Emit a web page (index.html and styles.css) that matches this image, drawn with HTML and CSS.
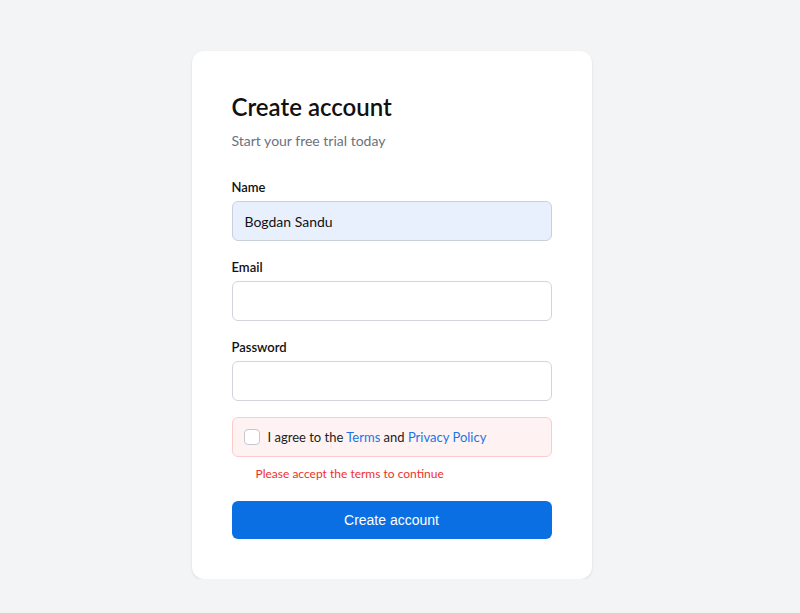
FILE: index.html
```html
<!DOCTYPE html>
<html lang="en">
<head>
<meta charset="utf-8">
<title>Create account</title>
<link rel="stylesheet" href="styles.css">
</head>
<body>
<main class="page">
  <form class="card">
    <h1 class="title">Create account</h1>
    <p class="subtitle">Start your free trial today</p>

    <div class="field">
      <label class="label" for="name">Name</label>
      <input class="input input-filled" id="name" type="text" value="Bogdan Sandu">
    </div>

    <div class="field">
      <label class="label" for="email">Email</label>
      <input class="input" id="email" type="email">
    </div>

    <div class="field">
      <label class="label" for="password">Password</label>
      <input class="input" id="password" type="password">
    </div>

    <div class="terms">
      <span class="checkbox"></span>
      <span class="terms-text">I agree to the <a class="link" href="#">Terms</a> and <a class="link" href="#">Privacy Policy</a></span>
    </div>
    <p class="error">Please accept the terms to continue</p>

    <button class="button" type="button">Create account</button>
  </form>
</main>
</body>
</html>
```

FILE: styles.css
```css
* { box-sizing: border-box; }

html, body {
  margin: 0;
  padding: 0;
  background: #f3f4f6;
  font-family: "Lato", "Noto Sans", sans-serif;
  color: #111827;
}

.page {
  display: flex;
  justify-content: center;
  padding: 51px 17px 0 0;
}

.card {
  width: 400px;
  background: #ffffff;
  border-radius: 12px;
  padding: 40px;
  box-shadow: 0 1px 3px rgba(0, 0, 0, 0.08), 0 1px 2px rgba(0, 0, 0, 0.04);
  display: flex;
  flex-direction: column;
}

.title {
  margin: 0;
  font-size: 24px;
  line-height: 32px;
  font-weight: 600;
  color: #111111;
}

.subtitle {
  margin: 8px 0 0;
  font-size: 14px;
  line-height: 20px;
  color: #6b7280;
}

.field {
  display: flex;
  flex-direction: column;
  gap: 5px;
  margin-top: 17px;
}

.field:first-of-type {
  margin-top: 27px;
}

.label {
  font-size: 13px;
  line-height: 18px;
  font-weight: 600;
  color: #111111;
}

.input {
  height: 40px;
  width: 100%;
  border: 1px solid #d1d5db;
  border-radius: 6px;
  padding: 0 12px;
  font-family: inherit;
  font-size: 14px;
  color: #111111;
  background: #ffffff;
  outline: none;
}

.input-filled {
  background: #e8f0fe;
  border-color: #c9d0da;
}

.terms {
  margin-top: 16px;
  height: 40px;
  display: flex;
  align-items: center;
  gap: 8px;
  padding: 0 11px;
  background: #fef3f2;
  border: 1px solid #fecaca;
  border-radius: 6px;
}

.checkbox {
  width: 16px;
  height: 16px;
  border: 1px solid #c4c8ce;
  border-radius: 4px;
  background: #ffffff;
  flex: none;
}

.terms-text {
  font-size: 13px;
  color: #222222;
}

.link {
  color: #1a73e8;
  text-decoration: none;
}

.error {
  margin: 9px 0 0 24px;
  font-size: 12px;
  line-height: 16px;
  color: #ef3030;
}

.button {
  margin-top: 19px;
  height: 38px;
  width: 100%;
  border: none;
  border-radius: 6px;
  background: #0a6fe3;
  color: #ffffff;
  font-family: "Liberation Sans", Arial, sans-serif;
  font-size: 14px;
  cursor: pointer;
}
```
